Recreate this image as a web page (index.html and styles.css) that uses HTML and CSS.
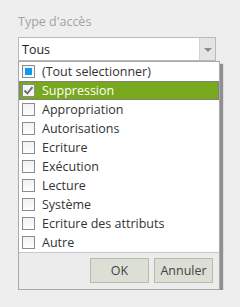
FILE: index.html
```html
<!DOCTYPE html>
<html lang="fr">
<head>
  <meta charset="UTF-8" />
  <title>Type d'accès</title>
  <link rel="stylesheet" href="styles.css">
</head>
<body>
  <div class="field">
    <div class="field-label">Type d'accès</div>

    <div class="select">
      <span class="select-value">Tous</span>
      <span class="select-arrow"></span>
    </div>

    <!-- liste déroulante -->
    <div class="panel">
      <ul class="options">
        <li class="option"><span class="box partial"></span>(Tout selectionner)</li>
        <li class="option active">
          <span class="box checked">
            <svg width="11" height="11" viewBox="0 0 11 11"><path d="M1.5 5.5 L4.3 8.3 L9.5 2.2" fill="none" stroke="#6a6a6a" stroke-width="1.8"/></svg>
          </span>Suppression</li>
        <li class="option"><span class="box"></span>Appropriation</li>
        <li class="option"><span class="box"></span>Autorisations</li>
        <li class="option"><span class="box"></span>Ecriture</li>
        <li class="option"><span class="box"></span>Exécution</li>
        <li class="option"><span class="box"></span>Lecture</li>
        <li class="option"><span class="box"></span>Système</li>
        <li class="option"><span class="box"></span>Ecriture des attributs</li>
        <li class="option"><span class="box"></span>Autre</li>
      </ul>
      <div class="panel-footer">
        <button class="btn">OK</button>
        <button class="btn">Annuler</button>
      </div>
    </div>
  </div>
</body>
</html>
```

FILE: styles.css
```css
body {
  margin: 0;
  background: #eeeeee;
  font-family: 'Open Sans', 'Noto Sans', sans-serif;
  font-size: 12px;
  color: #333;
}

.field {
  padding: 14px 0 0 18px;
}

.field-label {
  color: #a3a3a3;
  font-size: 12.5px;
  line-height: 16px;
  margin-bottom: 7px;
}

.select {
  width: 196px;
  height: 22px;
  border: 1px solid #b9b9b9;
  background: #fff;
  display: flex;
  align-items: center;
}

.select-value {
  flex: 1;
  padding-left: 3px;
  font-size: 12.5px;
  color: #222;
}

.select-arrow {
  width: 15px;
  height: 22px;
  background: #e4e4e4;
  border-left: 1px solid #d2d2d2;
  position: relative;
}

.select-arrow::after {
  content: "";
  position: absolute;
  left: 4px;
  top: 10px;
  border-left: 4px solid transparent;
  border-right: 4px solid transparent;
  border-top: 4px solid #8a8a8a;
}

.panel {
  width: 200px;
  border: 1px solid #a8a8a8;
  background: #fff;
  box-shadow: 3px 3px 1px rgba(0, 0, 0, 0.4);
}

.options {
  list-style: none;
  margin: 0;
  padding: 0;
}

.option {
  height: 19px;
  display: flex;
  align-items: center;
  padding-left: 3px;
  gap: 7px;
  font-size: 12.5px;
  color: #333;
  box-sizing: border-box;
}

.option.active {
  background: #78a81e;
  color: #fff;
  outline: 1px dotted #8a5fd0;
  outline-offset: -1px;
}

.box {
  width: 11px;
  height: 11px;
  border: 1px solid #8c8c8c;
  background: linear-gradient(#f2f2f2, #fdfdfd);
  display: flex;
  align-items: center;
  justify-content: center;
  flex-shrink: 0;
}

.box.partial::after {
  content: "";
  width: 7px;
  height: 7px;
  background: #0b9bf0;
}

.box.checked {
  background: #f4f4f4;
}

.panel-footer {
  border-top: 1px solid #c9c9c9;
  background: #ececec;
  display: flex;
  justify-content: flex-end;
  gap: 5px;
  padding: 5px 6px 6px 0;
}

.btn {
  height: 25px;
  width: 59px;
  background: #dcdfd5;
  border: 1px solid #b8bda9;
  font-family: 'Open Sans', 'Noto Sans', sans-serif;
  font-size: 12.5px;
  color: #444;
  padding: 0;
}
```
